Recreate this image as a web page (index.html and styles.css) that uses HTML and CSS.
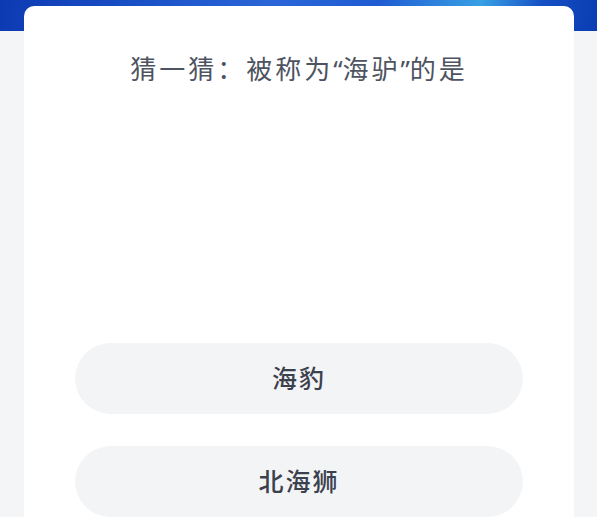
FILE: index.html
```html
<!DOCTYPE html>
<html lang="zh-CN">
<head>
    <meta charset="UTF-8">
    <meta name="viewport" content="width=device-width, initial-scale=1.0">
    <title>猜一猜</title>
    <link rel="stylesheet" href="styles.css">
</head>
<body>
    <div class="banner"></div>
    <div class="card">
        <h1 class="question">猜一猜：被称为<span class="quote">“</span>海驴<span class="quote">”</span>的是</h1>
        <div class="figure"></div>
        <div class="options">
            <button class="option">海豹</button>
            <button class="option">北海狮</button>
        </div>
    </div>
</body>
</html>
```

FILE: styles.css
```css
body {
    margin: 0;
    height: 100vh;
    background: #f4f5f7;
    font-family: "Noto Sans CJK SC", "Noto Sans", sans-serif;
    overflow: hidden;
}
.banner {
    height: 31px;
    background: linear-gradient(100deg, #0c3ab2 0%, #1a4fc6 22%, #2a66d8 45%, #1f5cd2 63%, #38a0e4 80%, #1550c4 90%, #0a3cb2 100%);
}
.card {
    box-sizing: border-box;
    height: 511px;
    margin: -25px 23px 0 24px;
    padding-top: 45px;
    background: #fff;
    border-radius: 10px 10px 0 0;
}
.question {
    margin: 0;
    text-align: center;
    font-size: 26px;
    line-height: 34px;
    font-weight: 400;
    letter-spacing: 3px;
    color: #4d5361;
}
.quote {
    font-family: "Noto Sans", sans-serif;
    letter-spacing: 0;
}
.figure {
    height: 257px;
}
.options {
    display: flex;
    flex-direction: column;
    gap: 32px;
    padding: 0 51px;
}
.option {
    height: 71px;
    padding: 0 0 3px;
    border: none;
    border-radius: 36px;
    background: #f3f4f6;
    font-family: inherit;
    font-size: 25px;
    font-weight: 500;
    letter-spacing: 2px;
    color: #3b414d;
}
```
